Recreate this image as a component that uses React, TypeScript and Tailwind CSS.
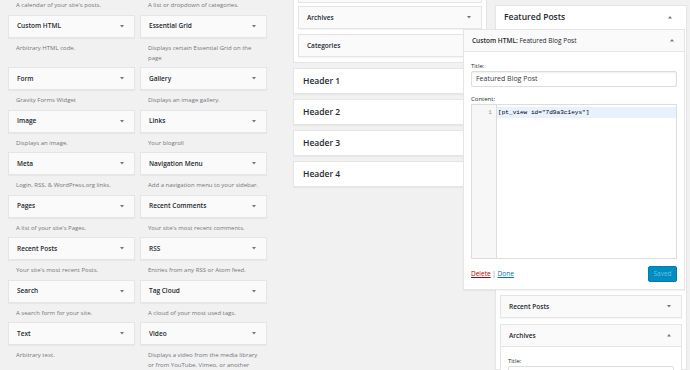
import React from "react";

type Available = { title: string; desc: string[] };

const rows: Array<[Available, Available]> = [
  [
    { title: "Custom HTML", desc: ["Arbitrary HTML code."] },
    { title: "Essential Grid", desc: ["Displays certain Essential Grid on the", "page"] },
  ],
  [
    { title: "Form", desc: ["Gravity Forms Widget"] },
    { title: "Gallery", desc: ["Displays an image gallery."] },
  ],
  [
    { title: "Image", desc: ["Displays an image."] },
    { title: "Links", desc: ["Your blogroll"] },
  ],
  [
    { title: "Meta", desc: ["Login, RSS, & WordPress.org links."] },
    { title: "Navigation Menu", desc: ["Add a navigation menu to your sidebar."] },
  ],
  [
    { title: "Pages", desc: ["A list of your site's Pages."] },
    { title: "Recent Comments", desc: ["Your site's most recent comments."] },
  ],
  [
    { title: "Recent Posts", desc: ["Your site's most recent Posts."] },
    { title: "RSS", desc: ["Entries from any RSS or Atom feed."] },
  ],
  [
    { title: "Search", desc: ["A search form for your site."] },
    { title: "Tag Cloud", desc: ["A cloud of your most used tags."] },
  ],
  [
    { title: "Text", desc: ["Arbitrary text."] },
    {
      title: "Video",
      desc: ["Displays a video from the media library", "or from YouTube, Vimeo, or another", "provider."],
    },
  ],
];

function Caret({ up = false }: { up?: boolean }) {
  return (
    <svg width="4" height="3" viewBox="0 0 4 3" className="shrink-0">
      <polygon points={up ? "0,2.5 4,2.5 2,0" : "0,0 4,0 2,2.5"} fill="#72777c" />
    </svg>
  );
}

function WidgetBar({ title, up = false, caret = true }: { title: string; up?: boolean; caret?: boolean }) {
  return (
    <div className="flex h-[23px] items-center justify-between border border-[#e5e5e5] bg-[#fafafa] pl-[8px] pr-[10px] shadow-[0_1px_1px_rgba(0,0,0,0.04)]">
      <span className="text-[6.5px] font-semibold text-[#23282d]">{title}</span>
      {caret && <Caret up={up} />}
    </div>
  );
}

function Desc({ lines, first = false }: { lines: string[]; first?: boolean }) {
  return (
    <div className={`${first ? "pt-0" : "pt-[5px]"} pb-[4.5px] px-[8px] text-[6px] leading-[10px] text-[#72777c] whitespace-nowrap`}>
      {lines.map((l) => (
        <div key={l}>{l}</div>
      ))}
    </div>
  );
}

function HeaderBox({ label }: { label: string }) {
  return (
    <div className="flex h-[26px] items-center border border-[#e5e5e5] bg-white pl-[9px] shadow-[0_1px_1px_rgba(0,0,0,0.04)]">
      <span className="text-[8.5px] font-semibold text-[#23282d]">{label}</span>
    </div>
  );
}

export default function App() {
  return (
    <div className="flex h-[370px] w-[690px] overflow-hidden bg-[#f1f1f1] font-['Open_Sans',sans-serif]">
      {/* available widgets */}
      <div className="ml-[8px] grid w-[259px] shrink-0 grid-cols-[127px_127px] content-start gap-x-[5px]">
        <Desc first lines={["A calendar of your site's posts."]} />
        <Desc first lines={["A list or dropdown of categories."]} />
        {rows.map(([a, b]) => (
          <React.Fragment key={a.title}>
            <div>
              <WidgetBar title={a.title} />
              <Desc lines={a.desc} />
            </div>
            <div>
              <WidgetBar title={b.title} />
              <Desc lines={b.desc} />
            </div>
          </React.Fragment>
        ))}
      </div>

      {/* sidebars */}
      <div className="ml-[26px] flex w-[194px] shrink-0 flex-col gap-[5px]">
        <div className="border-x border-b border-[#e5e5e5] bg-white px-[4px] pb-[5px]">
          <div className="h-[3px] border-x border-b border-[#e5e5e5] bg-[#fafafa]" />
          <div className="mt-[3px]">
            <WidgetBar title="Archives" />
          </div>
          <div className="mt-[5px]">
            <WidgetBar title="Categories" caret={false} />
          </div>
        </div>
        <HeaderBox label="Header 1" />
        <HeaderBox label="Header 2" />
        <HeaderBox label="Header 3" />
        <HeaderBox label="Header 4" />
      </div>

      {/* featured posts sidebar */}
      <div className="ml-[8px] mt-[5px] w-[192px] shrink-0 border border-[#e5e5e5] bg-white px-[4px] shadow-[0_1px_1px_rgba(0,0,0,0.04)]">
        <div className="flex h-[23px] items-center justify-between pl-[4px] pr-[10px]">
          <span className="text-[8.5px] font-semibold text-[#23282d]">Featured Posts</span>
          <Caret up />
        </div>

        {/* expanded custom html widget */}
        <div className="relative z-10 ml-[-37px] w-[222px] border border-[#e5e5e5] bg-white shadow-[0_1px_1px_rgba(0,0,0,0.04)]">
          <div className="flex h-[22px] items-center justify-between border-b border-[#e5e5e5] bg-[#fafafa] pl-[8px] pr-[10px]">
            <span className="text-[6.5px] text-[#23282d]">
              <span className="font-semibold">Custom HTML:</span> Featured Blog Post
            </span>
            <Caret up />
          </div>
          <div className="px-[7px] pb-[7px] pt-[9px]">
            <div className="text-[6px] leading-[10px] text-[#23282d]">Title:</div>
            <div className="flex h-[16px] items-center rounded-[2px] border border-[#ddd] px-[4px] text-[7px] text-[#32373c] shadow-[inset_0_1px_2px_rgba(0,0,0,0.07)]">
              Featured Blog Post
            </div>
            <div className="mt-[7px] text-[6px] leading-[10px] text-[#23282d]">Content:</div>
            <div className="flex h-[155px] border border-[#ddd]">
              <div className="w-[25px] shrink-0 border-r border-[#ddd] bg-[#f7f7f7] pt-[2px] pr-[4px] text-right font-['Liberation_Mono',monospace] text-[6.1px] leading-[11px] text-[#999]">
                1
              </div>
              <div className="flex-1 pt-[2px]">
                <div className="bg-[#e8f2fe] pl-[1px] font-['Liberation_Mono',monospace] text-[6.1px] leading-[11px] text-black">
                  [pt_view id="7d9a3c1eys"]
                </div>
              </div>
            </div>
            <div className="mt-[7px] flex items-center justify-between">
              <span className="text-[6.5px] text-[#72777c]">
                <span className="text-[#a00] underline">Delete</span> | <span className="text-[#0073aa] underline">Done</span>
              </span>
              <div className="flex h-[16px] w-[29px] items-center justify-center rounded-[2px] border border-[#007cb2] bg-[#008ec2] text-[6.5px] text-[#66c6e4]">
                Saved
              </div>
            </div>
          </div>
        </div>

        <div className="mt-[5px]">
          <WidgetBar title="Recent Posts" />
        </div>
        <div className="mt-[6px] border border-[#e5e5e5] bg-white">
          <div className="flex h-[22px] items-center justify-between border-b border-[#e5e5e5] bg-[#fafafa] pl-[8px] pr-[10px]">
            <span className="text-[6.5px] font-semibold text-[#23282d]">Archives</span>
            <Caret up />
          </div>
          <div className="px-[7px] pt-[9px]">
            <div className="text-[6px] leading-[10px] text-[#23282d]">Title:</div>
            <div className="h-[16px] rounded-[2px] border border-[#ddd]" />
          </div>
        </div>
      </div>
    </div>
  );
}
